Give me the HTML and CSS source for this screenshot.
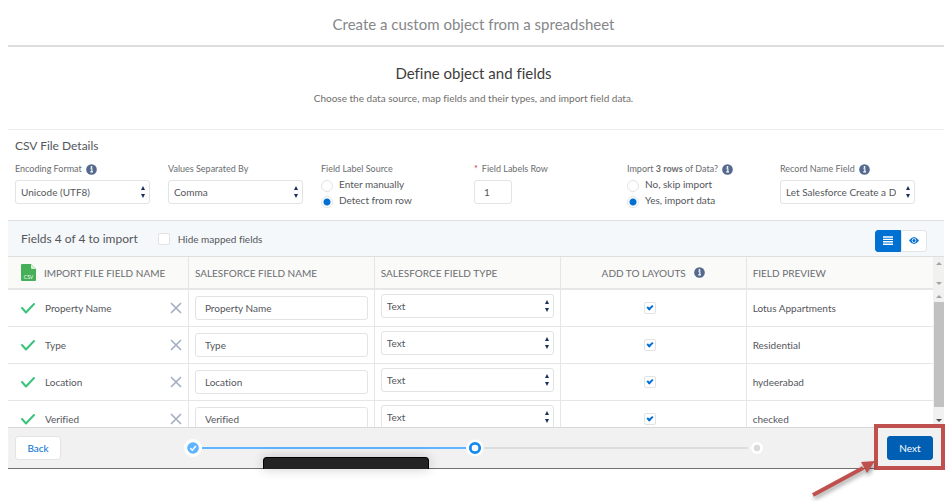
FILE: index.html
```html
<!DOCTYPE html>
<html lang="en">
<head>
<meta charset="utf-8">
<title>Create a custom object from a spreadsheet</title>
<link rel="stylesheet" href="styles.css">
</head>
<body>
<svg class="sprite" aria-hidden="true">
  <symbol id="info" viewBox="0 0 12 12"><circle cx="6" cy="6" r="5.8" fill="#54698d"/><path d="M4.800 5.200h1.600v3.100M4.600 8.600h3" fill="none" stroke="#fff" stroke-width="1.200"/><circle cx="6" cy="3.300" r="1" fill="#fff"/></symbol>
  <symbol id="tick" viewBox="0 0 14 12"><path d="M1 6l4 4.500L13 2" fill="none" stroke="#3bc37b" stroke-width="2" stroke-linecap="round" stroke-linejoin="round"/></symbol>
  <symbol id="cross" viewBox="0 0 12 12"><path d="M1.500 1.500l9 9M10.500 1.500l-9 9" fill="none" stroke="#a4afc6" stroke-width="1.700" stroke-linecap="round"/></symbol>
</svg>
<main class="wizard">
  <header class="top"><h1>Create a custom object from a spreadsheet</h1></header>
  <section class="intro">
    <h2>Define object and fields</h2>
    <p>Choose the data source, map fields and their types, and import field data.</p>
  </section>
  <section class="details">
    <h3>CSV File Details</h3>
    <div class="grid">
      <div class="field">
        <div class="label"><label for="enc">Encoding Format</label><svg class="info"><use href="#info"/></svg></div>
        <span class="select"><select id="enc"><option>Unicode (UTF8)</option></select></span>
      </div>
      <div class="field">
        <div class="label"><label for="sep">Values Separated By</label></div>
        <span class="select"><select id="sep"><option>Comma</option></select></span>
      </div>
      <fieldset class="field">
        <legend class="label">Field Label Source</legend>
        <label class="radio"><input type="radio" name="source">Enter manually</label>
        <label class="radio"><input type="radio" name="source" checked>Detect from row</label>
      </fieldset>
      <div class="field">
        <div class="label"><span class="required">*</span><label for="row">Field Labels Row</label></div>
        <input class="text short" id="row" type="text" value="1">
      </div>
      <fieldset class="field">
        <legend class="label"><span>Import <b>3 rows</b> of Data?</span><svg class="info"><use href="#info"/></svg></legend>
        <label class="radio"><input type="radio" name="import">No, skip import</label>
        <label class="radio"><input type="radio" name="import" checked>Yes, import data</label>
      </fieldset>
      <div class="field">
        <div class="label"><label for="rec">Record Name Field</label><svg class="info"><use href="#info"/></svg></div>
        <span class="select"><select id="rec"><option>Let Salesforce Create a Default Field</option></select></span>
      </div>
    </div>
  </section>
  <section class="toolbar">
    <h3>Fields 4 of 4 to import</h3>
    <label class="hide"><input type="checkbox">Hide mapped fields</label>
    <div class="views">
      <button class="active" aria-label="List view"><svg viewBox="0 0 10 9"><path d="M0 1h10M0 3.400h10M0 5.800h10M0 8.200h10" stroke="#fff" stroke-width="1.400"/></svg></button>
      <button aria-label="Preview"><svg viewBox="0 0 10 9"><path d="M0 4.500Q5-2.500 10 4.500Q5 11.500 0 4.500z" fill="#0070d2"/><circle cx="5" cy="4.500" r="2.300" fill="#fff"/><circle cx="5" cy="4.500" r="1.600" fill="#0070d2"/></svg></button>
    </div>
  </section>
  <section class="mapping">
    <table>
      <colgroup><col class="c-file"><col class="c-name"><col class="c-type"><col class="c-add"><col class="c-preview"></colgroup>
      <thead><tr>
        <th><span class="cell file"><svg class="csv" viewBox="0 0 15 17"><path d="M1 0h9l5 5v11q0 1-1 1H1q-1 0-1-1V1q0-1 1-1z" fill="#45b058"/><path d="M10 0v4q0 1 1 1h4z" fill="#d5efd9"/><text x="7.500" y="14.500">CSV</text></svg>IMPORT FILE FIELD NAME</span></th>
        <th>SALESFORCE FIELD NAME</th>
        <th>SALESFORCE FIELD TYPE</th>
        <th><span class="cell center">ADD TO LAYOUTS<svg class="info"><use href="#info"/></svg></span></th>
        <th>FIELD PREVIEW</th>
      </tr></thead>
      <tbody>
        <tr>
          <td><span class="cell"><svg class="tick"><use href="#tick"/></svg>Property Name<button class="clear" aria-label="Clear Property Name"><svg><use href="#cross"/></svg></button></span></td>
          <td><input class="text" type="text" aria-label="Salesforce field name" value="Property Name"></td>
          <td><span class="select"><select aria-label="Field type"><option>Text</option></select></span></td>
          <td class="add"><input type="checkbox" aria-label="Add to layouts" checked></td>
          <td>Lotus Appartments</td>
        </tr>
        <tr>
          <td><span class="cell"><svg class="tick"><use href="#tick"/></svg>Type<button class="clear" aria-label="Clear Type"><svg><use href="#cross"/></svg></button></span></td>
          <td><input class="text" type="text" aria-label="Salesforce field name" value="Type"></td>
          <td><span class="select"><select aria-label="Field type"><option>Text</option></select></span></td>
          <td class="add"><input type="checkbox" aria-label="Add to layouts" checked></td>
          <td>Residential</td>
        </tr>
        <tr>
          <td><span class="cell"><svg class="tick"><use href="#tick"/></svg>Location<button class="clear" aria-label="Clear Location"><svg><use href="#cross"/></svg></button></span></td>
          <td><input class="text" type="text" aria-label="Salesforce field name" value="Location"></td>
          <td><span class="select"><select aria-label="Field type"><option>Text</option></select></span></td>
          <td class="add"><input type="checkbox" aria-label="Add to layouts" checked></td>
          <td>hydeerabad</td>
        </tr>
        <tr>
          <td><span class="cell"><svg class="tick"><use href="#tick"/></svg>Verified<button class="clear" aria-label="Clear Verified"><svg><use href="#cross"/></svg></button></span></td>
          <td><input class="text" type="text" aria-label="Salesforce field name" value="Verified"></td>
          <td><span class="select"><select aria-label="Field type"><option>Text</option></select></span></td>
          <td class="add"><input type="checkbox" aria-label="Add to layouts" checked></td>
          <td>checked</td>
        </tr>
      </tbody>
    </table>
    <div class="bars" aria-hidden="true">
      <div class="bar head"><i class="up"></i><i class="down"></i></div>
      <div class="bar body"><i class="up"></i><span class="thumb"></span><i class="down dark"></i></div>
    </div>
  </section>
  <footer class="footer">
    <button class="btn">Back</button>
    <div class="steps">
      <span class="step"><svg viewBox="0 0 18 18"><circle cx="9" cy="9" r="9" fill="#fff"/><circle cx="9" cy="9" r="5.800" fill="#5eb4ff"/><path d="M6.300 9.200l2 2L11.900 7" fill="none" stroke="#fff" stroke-width="1.500"/></svg></span>
      <span class="line done"></span>
      <span class="step"><svg viewBox="0 0 18 18"><circle cx="9" cy="9" r="8.500" fill="#fff"/><circle cx="9" cy="9" r="4.700" fill="#fff" stroke="#1589ee" stroke-width="2.800"/></svg></span>
      <span class="line"></span>
      <span class="step"><svg viewBox="0 0 18 18"><circle cx="9" cy="9" r="6" fill="#fff"/><circle cx="9" cy="9" r="3.200" fill="#d8dade"/></svg></span>
    </div>
    <div class="next">
      <button class="btn brand">Next</button>
      <span class="frame"></span>
      <svg class="arrow" viewBox="0 0 76 46" aria-hidden="true"><path d="M8 39L58 12" stroke="#c0504d" stroke-width="4"/><path d="M70 5L56 6L62 17z" fill="#c0504d"/></svg>
    </div>
    <div class="preview-bar"></div>
  </footer>
</main>
</body>
</html>
```

FILE: styles.css
```css
* { box-sizing: border-box; }
body { margin: 0; min-height: 100vh; background: #fff; color: #54565a; font: 10px/14px Lato, sans-serif; font-variant-ligatures: none; }
h1, h2, h3, p, fieldset, legend { margin: 0; padding: 0; border: 0; font-weight: 400; }
button, input, select { font: inherit; color: inherit; }
.sprite { display: none; }
svg { display: block; flex: none; }

.wizard { display: flex; flex-direction: column; height: calc(100vh - 32px); margin: 0 5px 0 8px; }
.top { padding: 14px 5px 11px 0; border-bottom: 2px solid #dddddf; text-align: center; }
.top h1 { font-size: 15px; line-height: 20px; color: #85878a; }
.intro { padding: 16px 5px 24px 0; text-align: center; border-bottom: 1px solid #ececec; }
.intro h2 { font-size: 15px; line-height: 20px; color: #3e3e3c; }
.intro p { margin-top: 8px; font-size: 10px; line-height: 14px; color: #706e6b; }

.details { height: 91px; padding: 7px 29px 0 7px; border-bottom: 1px solid #dddfe1; }
.details h3 { font-size: 12px; line-height: 18px; }
.grid { display: grid; grid-template-columns: repeat(6, 1fr); column-gap: 18px; padding-top: 7px; }
.label { display: flex; align-items: center; gap: 4px; height: 14px; font-size: 9px; white-space: nowrap; color: #6b6d70; }
.info { width: 11px; height: 11px; }
.required { color: #c23934; }
.field > .select, .field > .text { margin-top: 4px; }
.select { position: relative; display: block; }
.select::before, .select::after { content: ""; position: absolute; right: 5px; border: 2px solid transparent; pointer-events: none; }
.select::before { top: 6px; border-bottom: 4px solid #16325c; border-top: 0; }
.select::after { bottom: 6px; border-top: 4px solid #16325c; border-bottom: 0; }
select, .text { display: block; width: 100%; height: 24px; border: 1px solid #e2e3e5; border-radius: 3px; background: #fff; }
select { appearance: none; padding: 0 18px 0 5px; }
.text { padding: 0 9px; }
.short { width: 38px; }
.radio { display: flex; align-items: center; gap: 6px; height: 16px; }
.radio input { appearance: none; width: 12px; height: 12px; margin: 3px 0 0; border: 1px solid #e2e3e5; border-radius: 50%; }
.radio input:checked { background: radial-gradient(circle, #0070d2 3px, #fff 4px); }

.toolbar { display: flex; align-items: center; height: 35px; padding: 0 17px 0 13px; background: #f4f8fb; }
.toolbar h3 { font-size: 12px; }
.hide { display: flex; align-items: center; gap: 8px; margin-left: 20px; }
input[type="checkbox"] { appearance: none; display: block; width: 12px; height: 12px; margin: 0; border: 1px solid #e2e3e5; border-radius: 2px; background: #fff; }
.views { display: flex; margin: 4px 0 0 auto; }
.views button { display: grid; place-items: center; width: 26px; height: 22px; padding: 0; border: 1px solid #e2e5e8; border-radius: 0 3px 3px 0; background: #fff; }
.views .active { background: #0070d2; border-color: #0070d2; border-radius: 3px 0 0 3px; }
.views svg { width: 10px; height: 9px; }

.mapping { flex: 1; min-height: 0; display: flex; overflow: hidden; border-top: 1px solid #dddfe1; }
table { flex: 1; height: 0; table-layout: fixed; border-collapse: collapse; }
.c-file { width: 19.500%; }
.c-name, .c-type { width: 20.100%; }
.c-add { width: 20.100%; }
th, td { height: 37px; padding: 0 6px; border-bottom: 1px solid #e6e6e6; border-left: 1px solid #e6e6e6; text-align: left; font-weight: 400; white-space: nowrap; }
th:first-child, td:first-child { border-left: 0; padding-left: 13px; }
th { height: 32px; background: #fafaf9; border-bottom: 2px solid #e6e6e6; color: #6b6d70; }
.cell { display: flex; align-items: center; gap: 10px; }
.center, .file { gap: 8px; }
.center { justify-content: center; }
.csv { width: 15px; height: 17px; }
.csv text { font: 5px Lato, sans-serif; fill: #fff; text-anchor: middle; }
.tick { width: 14px; height: 12px; }
.clear { margin-left: auto; padding: 0; border: 0; background: none; }
.clear svg { width: 12px; height: 12px; }
td .select { padding-bottom: 3px; }
td .select::after { bottom: 9px; }
td.add { padding-right: 12px; }
.add input { margin: auto; }
.add input::after { content: ""; display: block; width: 4px; height: 2px; margin: 2px; border: solid #0070d2; border-width: 0 0 2px 2px; transform: rotate(-45deg); }

.bars { display: flex; flex-direction: column; flex: none; width: 11px; }
.bar { display: flex; flex-direction: column; align-items: center; background: #f1f1f1; padding: 5px 0; justify-content: space-between; }
.head { height: 33px; }
.body { flex: 1; }
.bar i { border: 3px solid transparent; }
.bar .up { border-top: 0; border-bottom-color: #a3a3a3; }
.bar .down { border-bottom: 0; border-top-color: #a3a3a3; }
.bar .dark { border-top-color: #505050; }
.thumb { flex: 1; width: 10px; margin: 4px 0 12px; background: #c1c1c1; }

.footer { position: relative; display: flex; align-items: center; height: 42px; padding: 0 11px 0 7px; background: #f1f1f1; border-top: 1px solid #d8d8d8; border-bottom: 1px solid #707070; }
.btn { width: 46px; height: 24px; padding: 0; border: 1px solid #e4e4e4; border-radius: 3px; background: #fff; color: #0070d2; }
.btn.brand { background: #005fb2; border-color: #005fb2; color: #fff; }
.steps { flex: 1; display: flex; align-items: center; margin: 0 121px 0 123px; }
.step svg { width: 18px; height: 18px; }
.line { flex: 1; height: 2px; background: #dddddd; }
.done { background: #5eb4ff; }
.next { position: relative; }
.frame { position: absolute; inset: -12px -12px -10px -13px; border: 4px solid #c0504d; pointer-events: none; }
.arrow { position: absolute; right: 52px; top: 20px; width: 76px; height: 46px; filter: drop-shadow(1px 3px 2px rgba(0, 0, 0, 0.35)); }
.preview-bar { position: absolute; left: 27.200%; bottom: -1px; width: 166px; height: 12px; background: #232323; border: 1px solid #000; border-bottom: 0; border-radius: 4px 4px 0 0; box-shadow: 0 0 12px rgba(0, 0, 0, 0.2); }
```
